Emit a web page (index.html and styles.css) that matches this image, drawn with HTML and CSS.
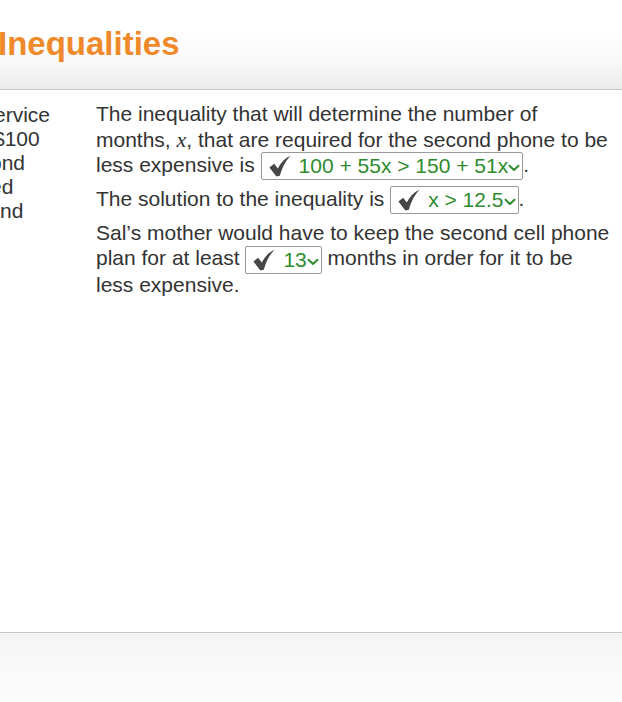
FILE: index.html
```html
<!DOCTYPE html>
<html>
<head>
<meta charset="utf-8">
<link rel="stylesheet" href="styles.css">
</head>
<body>
<header class="top">
  <h1 class="title">Inequalities</h1>
</header>
<main class="main">
  <div class="side">
    <div class="ln l1">ervice</div>
    <div class="ln l2">$100</div>
    <div class="ln l3">ond</div>
    <div class="ln l4">ed</div>
    <div class="ln">nd</div>
  </div>
  <div class="content">
    <p class="para">The inequality that will determine the number of months, <span class="math">x</span>, that are required for the second phone to be less expensive is <span class="sel"><svg class="chk" width="22" height="22" viewBox="0 0 22 22"><path d="M0.4 12.4 L5.2 8.8 L8.8 13.6 C11.6 8 15.6 3.4 21.4 0.8 C16.8 5.6 13.2 12.2 10.8 20.8 L7.4 21.4 Z" fill="#464646"/></svg><span class="val">100 + 55x &gt; 150 + 51x</span><svg class="chev" width="12" height="8" viewBox="0 0 12 8"><path d="M1.5 1.8 L6 6 L10.5 1.8" fill="none" stroke="#2e8b2e" stroke-width="2" stroke-linecap="round" stroke-linejoin="round"/></svg></span>.</p>
    <p class="para">The solution to the inequality is <span class="sel"><svg class="chk" width="22" height="22" viewBox="0 0 22 22"><path d="M0.4 12.4 L5.2 8.8 L8.8 13.6 C11.6 8 15.6 3.4 21.4 0.8 C16.8 5.6 13.2 12.2 10.8 20.8 L7.4 21.4 Z" fill="#464646"/></svg><span class="val">x &gt; 12.5</span><svg class="chev" width="12" height="8" viewBox="0 0 12 8"><path d="M1.5 1.8 L6 6 L10.5 1.8" fill="none" stroke="#2e8b2e" stroke-width="2" stroke-linecap="round" stroke-linejoin="round"/></svg></span>.</p>
    <p class="para">Sal’s mother would have to keep the second cell phone plan for at least <span class="sel"><svg class="chk" width="22" height="22" viewBox="0 0 22 22"><path d="M0.4 12.4 L5.2 8.8 L8.8 13.6 C11.6 8 15.6 3.4 21.4 0.8 C16.8 5.6 13.2 12.2 10.8 20.8 L7.4 21.4 Z" fill="#464646"/></svg><span class="val">13</span><svg class="chev" width="12" height="8" viewBox="0 0 12 8"><path d="M1.5 1.8 L6 6 L10.5 1.8" fill="none" stroke="#2e8b2e" stroke-width="2" stroke-linecap="round" stroke-linejoin="round"/></svg></span> months in order for it to be less expensive.</p>
  </div>
</main>
<footer class="bottom"></footer>
</body>
</html>
```
FILE: styles.css
```css
html, body {
  margin: 0;
  padding: 0;
  width: 622px;
  height: 702px;
  overflow: hidden;
  background: #ffffff;
  font-family: "Liberation Sans", Arial, sans-serif;
  color: #333333;
}
body {
  display: flex;
  flex-direction: column;
}
.top {
  height: 89px;
  flex: none;
  border-bottom: 1px solid #c8c8c8;
  background: linear-gradient(to bottom, #ffffff 0%, #ffffff 35%, #f9f9f9 70%, #ebebeb 100%);
  display: flex;
  align-items: flex-start;
}
.title {
  margin: 25px 0 0 -2px;
  font-size: 33px;
  font-weight: bold;
  color: #f0892a;
  line-height: 38px;
}
.main {
  flex: 1;
  display: flex;
  padding-top: 11px;
}
.side {
  width: 96px;
  flex: none;
  font-size: 21px;
  line-height: 24px;
  color: #333333;
  padding-top: 2px;
  overflow: hidden;
}
.ln {
  white-space: nowrap;
}
.l1 {
  margin-left: -6px;
}
.l2 {
  margin-left: -7px;
}
.l3 {
  margin-left: -10px;
}
.l4 {
  margin-left: -10px;
}
.content {
  width: 514px;
  font-size: 21px;
  line-height: 25.5px;
  color: #333333;
}
.para {
  margin: 0 0 7.5px 0;
}
.math {
  font-family: "Liberation Serif", "Times New Roman", serif;
  font-style: italic;
  font-size: 22px;
}
.sel {
  display: inline-flex;
  align-items: center;
  height: 28px;
  box-sizing: border-box;
  border: 1px solid #9a9a9a;
  border-radius: 2px;
  padding: 0 2px 0 7px;
  margin: -2px 0;
  vertical-align: middle;
  line-height: 26px;
}
.chk {
  flex: none;
  margin-right: 8px;
}
.val {
  color: #2e8b2e;
}
.chev {
  flex: none;
  margin: 4px 0 0 0;
}
.bottom {
  height: 69px;
  flex: none;
  border-top: 1px solid #c8c8c8;
  background: linear-gradient(to bottom, #f3f3f3 0%, #f6f6f6 12%, #f9f9f9 50%, #fcfcfc 100%);
}
```
